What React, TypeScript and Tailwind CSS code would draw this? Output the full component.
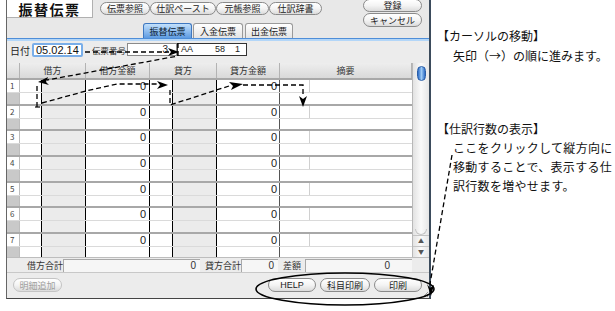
import React from "react";

const JP = "font-['Noto_Sans_CJK_JP',sans-serif]";
const NUM = "font-['Liberation_Sans','Noto_Sans_CJK_JP',sans-serif]";

const rowHeights = ["h-[26px]", "h-[25px]", "h-[26px]", "h-[26px]", "h-[25px]", "h-[26px]", "h-[25px]"];

const Pill = ({ label, className = "", disabled }: { label: string; className?: string; disabled?: boolean }) => (
    <div
        className={`flex items-center justify-center rounded-full border bg-gradient-to-b from-white via-[#f4f4f4] to-[#dcdcdc] text-[9px] leading-none ${
            disabled ? "border-[#c4c4c4] text-[#a0a0a0]" : "border-[#8a8a8a] text-[#222]"
        } ${className}`}
    >
        {label}
    </div>
);

const Tab = ({ label, active, className = "" }: { label: string; active?: boolean; className?: string }) => (
    <div
        className={`flex items-center justify-center rounded-t-[3px] border border-b-0 text-[9px] leading-none ${
            active
                ? "border-[#3f78c0] bg-gradient-to-b from-[#c2e0fb] to-[#5d9be2] text-[#0a1a30]"
                : "border-[#9a9a9a] bg-gradient-to-b from-white to-[#e4e4e4] text-[#222]"
        } ${className}`}
    >
        {label}
    </div>
);

const Row = ({ n, h }: { n: number; h: string }) => (
    <div className={`flex flex-col border-t-2 border-[#a8a8a8] ${h}`}>
        <div className="flex h-[13px] border-b border-[#dadada]">
            <div className="w-[13px] bg-white border-r border-[#bdbdbd] pl-[3px] text-[8px] leading-[12px] text-[#444]">{n}</div>
            <div className="w-[22px] bg-white border-r border-black" />
            <div className="w-[44px] bg-[#ebebeb] border-r border-black" />
            <div className={`w-[64px] bg-white border-r border-black pr-[3px] text-right text-[11px] leading-[12px] text-[#222] ${NUM}`}>0</div>
            <div className="w-[23px] bg-white border-r border-black" />
            <div className="w-[44px] bg-[#ebebeb] border-r border-black" />
            <div className={`w-[63px] bg-white border-r border-[#555] pr-[2px] text-right text-[11px] leading-[12px] text-[#222] ${NUM}`}>0</div>
            <div className="w-[30px] bg-white border-r border-[#d0d0d0]" />
            <div className="flex-1 bg-white" />
        </div>
        <div className="flex flex-1">
            <div className="w-[13px] bg-[#c9c9c9] border-r border-[#bdbdbd]" />
            <div className="w-[22px] bg-white border-r border-black" />
            <div className="w-[44px] bg-[#ebebeb] border-r border-black" />
            <div className="w-[64px] bg-white border-r border-black" />
            <div className="w-[23px] bg-white border-r border-black" />
            <div className="w-[44px] bg-[#ebebeb] border-r border-black" />
            <div className="w-[63px] bg-white border-r border-[#555]" />
            <div className="flex-1 bg-white" />
        </div>
    </div>
);

const headerCells = [
    { label: "", w: "w-[13px]" },
    { label: "借方", w: "w-[66px]" },
    { label: "借方金額", w: "w-[64px]" },
    { label: "貸方", w: "w-[67px]" },
    { label: "貸方金額", w: "w-[63px]" },
    { label: "摘要", w: "flex-1" },
];

const Window = () => (
    <div className="flex h-[299px] w-[425px] shrink-0 flex-col border-l border-b border-l-[#666] border-b-[#444] border-r-2 border-r-[#3b4b5c] bg-[#ececec]">
        {/* toolbar + tabs */}
        <div className="flex h-[38px] bg-[#e8e8e8]">
            <div className="flex w-[356px] flex-col">
                <div className="flex h-[22px] items-start">
                    <div className="flex h-[18px] w-[86px] items-center justify-center border-r border-b border-[#b0b0b0] bg-white pt-[1px] text-[14px] font-bold leading-none tracking-[1.5px] text-[#111]">
                        振替伝票
                    </div>
                    <div className="ml-[7px] mt-[2px] flex">
                        <Pill label="伝票参照" className="h-[13px] w-[50px]" />
                        <Pill label="仕訳ペースト" className="h-[13px] w-[66px]" />
                        <Pill label="元帳参照" className="h-[13px] w-[53px]" />
                        <Pill label="仕訳辞書" className="h-[13px] w-[53px]" />
                    </div>
                </div>
                <div className="flex h-[16px] items-end gap-[1px] pl-[136px] pt-[1px]">
                    <Tab label="振替伝票" active className="h-[15px] w-[49px]" />
                    <Tab label="入金伝票" className="h-[15px] w-[50px]" />
                    <Tab label="出金伝票" className="ml-[1px] h-[15px] w-[48px]" />
                </div>
            </div>
            <div className="mt-[-1px] flex w-[59px] flex-col gap-[1px]">
                <Pill label="登録" className="h-[13px] w-[59px]" />
                <Pill label="キャンセル" className="h-[14px] w-[59px]" />
            </div>
        </div>

        <div className="h-[3px] border-t border-[#4f8ed8] bg-[#b3d6f8]" />

        {/* date row */}
        <div className="flex h-[22px] items-start pt-[2px] text-[10px] leading-none text-[#222]">
            <span className="ml-[3px] mt-[3px] w-[22px]">日付</span>
            <div className={`flex h-[14px] w-[51px] items-center rounded-[2px] border-2 border-[#79aee9] bg-white pl-[2px] text-[11px] text-[#111] ${NUM}`}>
                05.02.14
            </div>
            <span className="ml-[9px] mt-[3px] w-[35px] whitespace-nowrap text-[8.5px] text-[#333]">伝票番号</span>
            <div className={`h-[13px] w-[50px] border border-[#8a8a8a] bg-white pr-[8px] text-right text-[10px] leading-[11px] ${NUM}`}>3</div>
            <div className={`flex h-[13px] w-[70px] items-center border border-[#333] bg-white text-[9px] ${NUM}`}>
                <span className="ml-[3px] w-[34px]">AA</span>
                <span className="w-[20px]">58</span>
                <span>1</span>
            </div>
        </div>

        {/* table */}
        <div className="flex h-[194px]">
            <div className="flex w-[405px] flex-col">
                <div className="flex h-[15px] bg-gradient-to-b from-[#eeeeee] to-[#d9d9d9] text-[9px] leading-[15px] text-[#333]">
                    {headerCells.map((c, i) => (
                        <div key={i} className={`${c.w} border-r border-[#b3b3b3] text-center`}>
                            {c.label}
                        </div>
                    ))}
                </div>
                {rowHeights.map((h, i) => (
                    <Row key={i} n={i + 1} h={h} />
                ))}
            </div>
            {/* scrollbar */}
            <div className="flex w-[17px] flex-col border-l border-[#b8b8b8] bg-gradient-to-r from-[#e2e2e2] via-[#fafafa] to-[#e6e6e6]">
                <div className="mx-auto mt-[3px] h-[15px] w-[9px] rounded-full border border-[#2a5ea8] bg-gradient-to-r from-[#2c6bc4] via-[#9ccaf6] to-[#2c6bc4]" />
                <div className="flex-1" />
                <div className="mx-[2px] h-[6px] rounded-b-full border-b border-x border-[#c4c4c4]" />
                <div className="flex h-[11px] items-center justify-center border-t border-[#c4c4c4] text-[6px] leading-none text-[#555]">▲</div>
                <div className="flex h-[11px] items-center justify-center border-t border-[#c4c4c4] text-[6px] leading-none text-[#555]">▼</div>
            </div>
        </div>

        {/* totals */}
        <div className="flex h-[15px] items-center border-t border-[#bdbdbd] text-[9px] leading-none text-[#333]">
            <span className="ml-[20px] w-[36px]">借方合計</span>
            <div className={`h-[13px] w-[137px] border-t border-l border-[#a8a8a8] bg-[#f6f6f6] pr-[4px] text-right text-[10px] leading-[12px] ${NUM}`}>0</div>
            <span className="ml-[5px] w-[36px]">貸方合計</span>
            <div className={`h-[13px] w-[37px] border-t border-l border-[#a8a8a8] bg-[#f6f6f6] pr-[4px] text-right text-[10px] leading-[12px] ${NUM}`}>0</div>
            <span className="ml-[5px] w-[18px]">差額</span>
            <div className={`ml-[4px] h-[13px] w-[107px] border-t border-l border-[#a8a8a8] bg-[#f6f6f6] pr-[22px] text-right text-[10px] leading-[12px] ${NUM}`}>0</div>
        </div>

        {/* bottom bar */}
        <div className="flex flex-1 items-start border-t border-[#c8c8c8] pt-[5px]">
            <Pill label="明細追加" disabled className="ml-[6px] h-[14px] w-[49px]" />
            <div className="ml-auto flex gap-[4px]">
                <Pill label="HELP" className={`h-[14px] w-[48px] ${NUM}`} />
                <Pill label="科目印刷" className="h-[14px] w-[50px]" />
                <Pill label="印刷" className="h-[14px] w-[48px]" />
            </div>
            <svg width="6" height="20" viewBox="0 0 6 20" className="ml-[1px] self-end">
                <path d="M0 19 L5 14 M2 19 L5 16 M4 19 L5 18" stroke="#999" strokeWidth="1" />
            </svg>
        </div>
    </div>
);

const Notes = () => (
    <div className={`ml-[6px] flex flex-col text-[12px] text-[#111] ${JP}`}>
        <div className="mt-[26px] leading-[20px] whitespace-nowrap">【カーソルの移動】</div>
        <div className="pl-[16px] leading-[20px] whitespace-nowrap">矢印（→）の順に進みます。</div>
        <div className="mt-[53px] leading-[19px] whitespace-nowrap">【仕訳行数の表示】</div>
        <div className="pl-[16px] leading-[19px] tracking-[0.3px] whitespace-nowrap">ここをクリックして縦方向に</div>
        <div className="pl-[16px] leading-[19px] tracking-[0.3px] whitespace-nowrap">移動することで、表示する仕</div>
        <div className="pl-[16px] leading-[19px] tracking-[0.3px] whitespace-nowrap">訳行数を増やせます。</div>
    </div>
);

const Overlay = () => (
    <svg className="pointer-events-none absolute left-0 top-0" width="615" height="311" viewBox="0 0 615 311">
        <g fill="none" stroke="#000" strokeWidth="1.3" strokeDasharray="5 3">
            <path d="M85 52 H169" />
            <path d="M178 43 V56 L47 80" />
            <path d="M37 86 V107" />
            <path d="M42 103 L86 91 L117 84 H157" />
            <path d="M170 90 V105 L229 86" />
            <path d="M243 85 H303 V97" />
            <path d="M452 155 L430 284" />
        </g>
        <g fill="#000">
            <polygon points="168,48 179,52 168,56 171,52" />
            <polygon points="38,82 48,77 46,82 49,85" />
            <polygon points="157,81 168,85 157,89 160,85" />
            <polygon points="229,82 243,84 231,90 233,86" />
            <polygon points="299,96 303,107 307,96 303,99" />
            <polygon points="427,284 431,296 434,285 430,288" />
        </g>
        <path d="M35 107 H40" stroke="#000" strokeWidth="1.2" />
        <ellipse cx="345" cy="289" rx="89" ry="16" fill="none" stroke="#000" strokeWidth="1.6" />
    </svg>
);

export default function App() {
    return (
        <div className={`relative flex h-[311px] w-[615px] overflow-hidden bg-white pl-[6px] ${JP}`}>
            <Window />
            <Notes />
            <Overlay />
        </div>
    );
}
